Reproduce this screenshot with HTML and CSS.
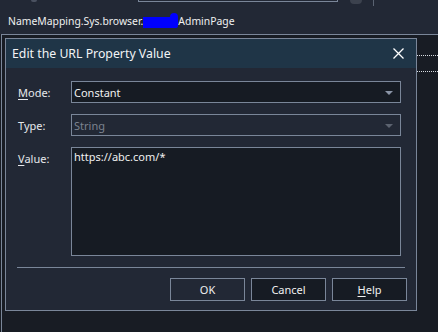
FILE: index.html
```html
<!DOCTYPE html>
<html>
<head>
<meta charset="utf-8">
<link rel="stylesheet" href="styles.css">
</head>
<body>
<div class="top">
  <div class="toolbar">
    <span class="tb-bump"></span>
    <span class="tb-box"></span>
    <span class="tb-circle"></span>
    <span class="tb-sep"></span>
  </div>
  <div class="path">NameMapping.Sys.browser.<span class="redact"></span>AdminPage</div>
</div>
<div class="panel">
  <div class="dialog">
    <div class="titlebar">
      <span class="title">Edit the URL Property Value</span>
      <svg class="close" width="11" height="11" viewBox="0 0 11 11"><path d="M0.5 0.5 L10.5 10.5 M10.5 0.5 L0.5 10.5" stroke="#ffffff" stroke-width="1.3" fill="none"/></svg>
    </div>
    <div class="body">
      <div class="form">
        <label class="lbl"><u>M</u>ode:</label>
        <div class="combo"><span>Constant</span><span class="arrow"></span></div>
        <label class="lbl">Type:</label>
        <div class="combo disabled"><span>String</span><span class="arrow"></span></div>
        <label class="lbl lbl-top"><u>V</u>alue:</label>
        <div class="textarea">https://abc.com/*</div>
      </div>
      <div class="sep"></div>
      <div class="buttons">
        <button class="btn default">OK</button>
        <button class="btn">Cancel</button>
        <button class="btn"><u>H</u>elp</button>
      </div>
    </div>
  </div>
  <div class="side">
    <div class="dots"></div>
    <div class="dots"></div>
  </div>
</div>
</body>
</html>
```
FILE: styles.css
```css
html, body {
  margin: 0;
  padding: 0;
}
body {
  width: 438px;
  height: 332px;
  overflow: hidden;
  background: #181c24;
  font-family: "Noto Sans", "Open Sans", sans-serif;
  font-size: 11px;
  color: #e6e8ec;
}
.top {
  height: 34px;
  background: #222835;
}
.toolbar {
  height: 7px;
  display: flex;
  align-items: flex-start;
  overflow: hidden;
}
.tb-bump {
  width: 6px;
  height: 2px;
  margin-left: 31px;
  background: #4a5160;
  border-radius: 0 0 3px 3px;
}
.tb-box {
  width: 198px;
  height: 1px;
  margin-left: 101px;
  border: 1px solid #7a8699;
  border-top: none;
}
.tb-circle {
  width: 12px;
  height: 4px;
  margin-left: 12px;
  background: #3c424e;
  border-radius: 0 0 6px 6px;
}
.tb-sep {
  width: 1px;
  height: 6px;
  margin-left: 11px;
  background: #5a6372;
}
.path {
  padding-left: 8px;
  margin-top: 7px;
  line-height: 14px;
  font-size: 10.4px;
  color: #f0f0f0;
}
.redact {
  display: inline-block;
  position: relative;
  width: 35px;
  height: 11px;
  vertical-align: -3px;
  background: #0000ff;
  border-radius: 0 2px 2px 0;
}
.redact::after {
  content: "";
  position: absolute;
  right: 0;
  top: -4px;
  width: 8px;
  height: 6px;
  background: #0000ff;
  border-radius: 4px 4px 0 0;
}
.panel {
  display: flex;
  border-top: 1px solid #7a8699;
  margin-left: 1px;
  border-left: 1px solid #7a8699;
  padding-left: 3px;
  padding-top: 3px;
  height: 297px;
}
.dialog {
  width: 412px;
  height: 273px;
  box-sizing: border-box;
  border: 1px solid #7a8699;
  background: #222835;
  display: flex;
  flex-direction: column;
}
.titlebar {
  height: 29px;
  background: #1f3547;
  display: flex;
  align-items: center;
  justify-content: space-between;
  padding: 0 12px 0 6px;
}
.title {
  font-size: 12.3px;
  color: #f2f4f6;
}
.close {
  display: block;
}
.body {
  flex: 1;
  padding: 13px 14px 0 12px;
}
.form {
  display: grid;
  grid-template-columns: 53px 330px;
  grid-template-rows: 22px 22px 109px;
  row-gap: 11px;
}
.lbl {
  align-self: center;
  color: #e6e8ec;
}
.lbl-top {
  align-self: start;
  padding-top: 4px;
}
u {
  text-decoration-thickness: 1px;
  text-underline-offset: 2px;
}
.combo {
  box-sizing: border-box;
  border: 1px solid #7a8699;
  background: #161b23;
  display: flex;
  align-items: center;
  justify-content: space-between;
  padding: 0 7px 0 2px;
  color: #f0f0f0;
}
.combo.disabled {
  background: #222835;
  color: #7c8390;
}
.arrow {
  width: 0;
  height: 0;
  border-left: 4px solid transparent;
  border-right: 4px solid transparent;
  border-top: 4px solid #8a94a6;
  margin-top: 1px;
}
.combo.disabled .arrow {
  border-top-color: #5c6370;
}
.textarea {
  box-sizing: border-box;
  border: 1px solid #7a8699;
  background: #161b23;
  padding: 1px 2px;
  color: #f0f0f0;
}
.sep {
  margin-top: 11px;
  margin-left: -1px;
  width: 388px;
  height: 1px;
  background: #7a8699;
}
.buttons {
  display: flex;
  justify-content: flex-end;
  gap: 6px;
  margin-top: 10px;
  margin-right: -5px;
}
.btn {
  width: 75px;
  height: 23px;
  box-sizing: border-box;
  border: 1px solid #7a8699;
  background: #161b23;
  color: #f0f0f0;
  font-family: inherit;
  font-size: 11px;
  padding: 0;
}
.btn.default {
  background: #222835;
}
.side {
  flex: 1;
  padding-top: 17px;
}
.dots {
  height: 15px;
  border-top: 1px dotted #d8dce2;
}
```
